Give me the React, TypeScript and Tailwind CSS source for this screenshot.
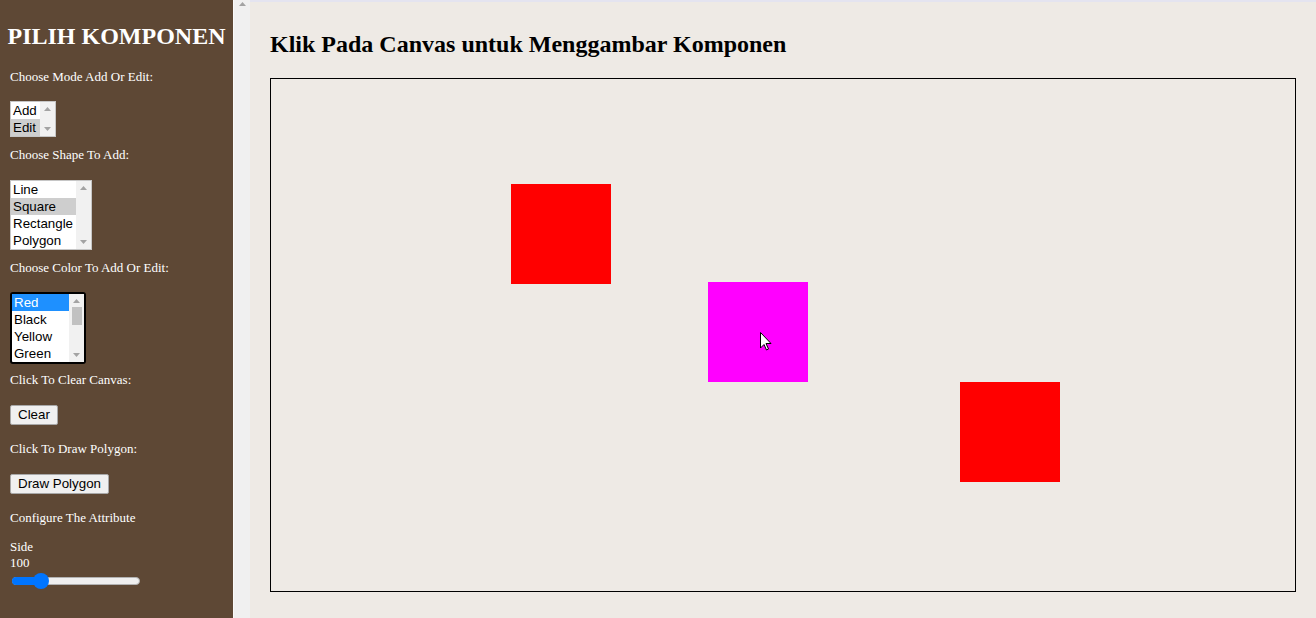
import React from 'react';

type ListBoxProps = {
  items: string[];
  selected: number;
  width: string;
  rows: number;
  focused?: boolean;
  thumb?: boolean;
};

const Arrow = ({ up }: { up: boolean }) => (
  <svg width="7" height="4" viewBox="0 0 7 4" className="block">
    {up ? <polygon points="0,4 3.5,0 7,4" fill="#a3a3a3" /> : <polygon points="0,0 3.5,4 7,0" fill="#a3a3a3" />}
  </svg>
);

const ListBox = ({ items, selected, width, rows, focused, thumb }: ListBoxProps) => {
  const shown = items.slice(0, rows);
  return (
    <div
      className={`${width} bg-white flex ${
        focused ? 'border-2 border-black rounded-[3px]' : 'border border-[#c6c6c6]'
      }`}
    >
      <div className="flex-1 flex flex-col">
        {shown.map((it, i) => (
          <div
            key={it}
            className={`h-[17px] leading-[17px] pl-[2px] text-[13.33px] ${
              i === selected
                ? focused
                  ? 'bg-[#1e90ff] text-white'
                  : 'bg-[#cecece] text-black'
                : 'text-black'
            }`}
          >
            {it}
          </div>
        ))}
      </div>
      <div className="w-[15px] bg-[#f1f1f1] flex flex-col items-center py-[5px]">
        <Arrow up />
        {thumb && <div className="w-[10px] h-[18px] bg-[#c1c1c1] mt-[4px]" />}
        <div className="flex-1" />
        <Arrow up={false} />
      </div>
    </div>
  );
};

const Label = ({ children, className = '' }: { children: React.ReactNode; className?: string }) => (
  <div className={`text-[13px] leading-[14px] text-white whitespace-nowrap ${className}`}>{children}</div>
);

const Btn = ({ children }: { children: React.ReactNode }) => (
  <button className="self-start h-[20px] px-[7px] bg-[#f0f0f0] border border-[#a8a8a8] rounded-[2px] text-[13.33px] leading-[18px] text-black font-['Liberation_Sans',Arial,sans-serif]">
    {children}
  </button>
);

export default function App() {
  return (
    <div className="flex w-[1316px] h-[618px] overflow-hidden bg-[#eeeae5]">
      <aside className="w-[233px] h-full bg-[#5e4835] flex flex-col px-[10px] font-['Liberation_Serif','Times_New_Roman',serif]">
        <h1 className="mt-[22px] -mx-[4px] text-center text-[24px] leading-[28px] font-bold text-white whitespace-nowrap">
          PILIH KOMPONEN
        </h1>
        <Label className="mt-[20px]">Choose Mode Add Or Edit:</Label>
        <div className="mt-[17px] font-['Liberation_Sans',Arial,sans-serif]">
          <ListBox items={['Add', 'Edit']} selected={1} width="w-[46px]" rows={2} />
        </div>
        <Label className="mt-[11px]">Choose Shape To Add:</Label>
        <div className="mt-[18px] font-['Liberation_Sans',Arial,sans-serif]">
          <ListBox items={['Line', 'Square', 'Rectangle', 'Polygon']} selected={1} width="w-[82px]" rows={4} />
        </div>
        <Label className="mt-[11px]">Choose Color To Add Or Edit:</Label>
        <div className="mt-[17px] font-['Liberation_Sans',Arial,sans-serif]">
          <ListBox items={['Red', 'Black', 'Yellow', 'Green', 'Blue']} selected={0} width="w-[76px]" rows={4} focused thumb />
        </div>
        <Label className="mt-[9px]">Click To Clear Canvas:</Label>
        <div className="mt-[18px] flex">
          <Btn>Clear</Btn>
        </div>
        <Label className="mt-[17px]">Click To Draw Polygon:</Label>
        <div className="mt-[18px] flex">
          <Btn>Draw Polygon</Btn>
        </div>
        <Label className="mt-[17px]">Configure The Attribute</Label>
        <Label className="mt-[15px]">Side</Label>
        <Label className="mt-[2px]">100</Label>
        <div className="mt-[3px] relative w-[130px] h-[16px]">
          <div className="absolute left-[2px] right-0 top-[4px] h-[8px] rounded-full bg-[#efefef] border border-[#b2b2b2]" />
          <div className="absolute left-[2px] w-[30px] top-[4px] h-[8px] rounded-l-full bg-[#0075ff]" />
          <div className="absolute left-[23px] top-0 w-[16px] h-[16px] rounded-full bg-[#0075ff]" />
        </div>
      </aside>
      <div className="w-[17px] h-full bg-[#f0f0f0] border-l border-[#fafafa] flex justify-center pt-[2px]">
        <Arrow up />
      </div>
      <main className="flex-1 h-full border-t-2 border-[#e4e4f0] pl-[20px] pr-[20px] font-['Liberation_Serif','Times_New_Roman',serif]">
        <h2 className="mt-[28px] text-[24px] leading-[28px] font-bold text-black whitespace-nowrap">
          Klik Pada Canvas untuk Menggambar Komponen
        </h2>
        <div className="mt-[20px] relative w-[1026px] h-[514px] border border-black">
          <div className="absolute left-[240px] top-[105px] w-[100px] h-[100px] bg-[#ff0000]" />
          <div className="absolute left-[437px] top-[203px] w-[100px] h-[100px] bg-[#ff00ff]" />
          <div className="absolute left-[689px] top-[303px] w-[100px] h-[100px] bg-[#ff0000]" />
          <svg className="absolute left-[489px] top-[253px]" width="12" height="19" viewBox="0 0 12 19">
            <polygon points="0.5,0.5 0.5,16 4,12.5 6.5,18 8.5,17 6,11.5 11,11.5" fill="white" stroke="black" strokeWidth="1" />
          </svg>
        </div>
      </main>
    </div>
  );
}
